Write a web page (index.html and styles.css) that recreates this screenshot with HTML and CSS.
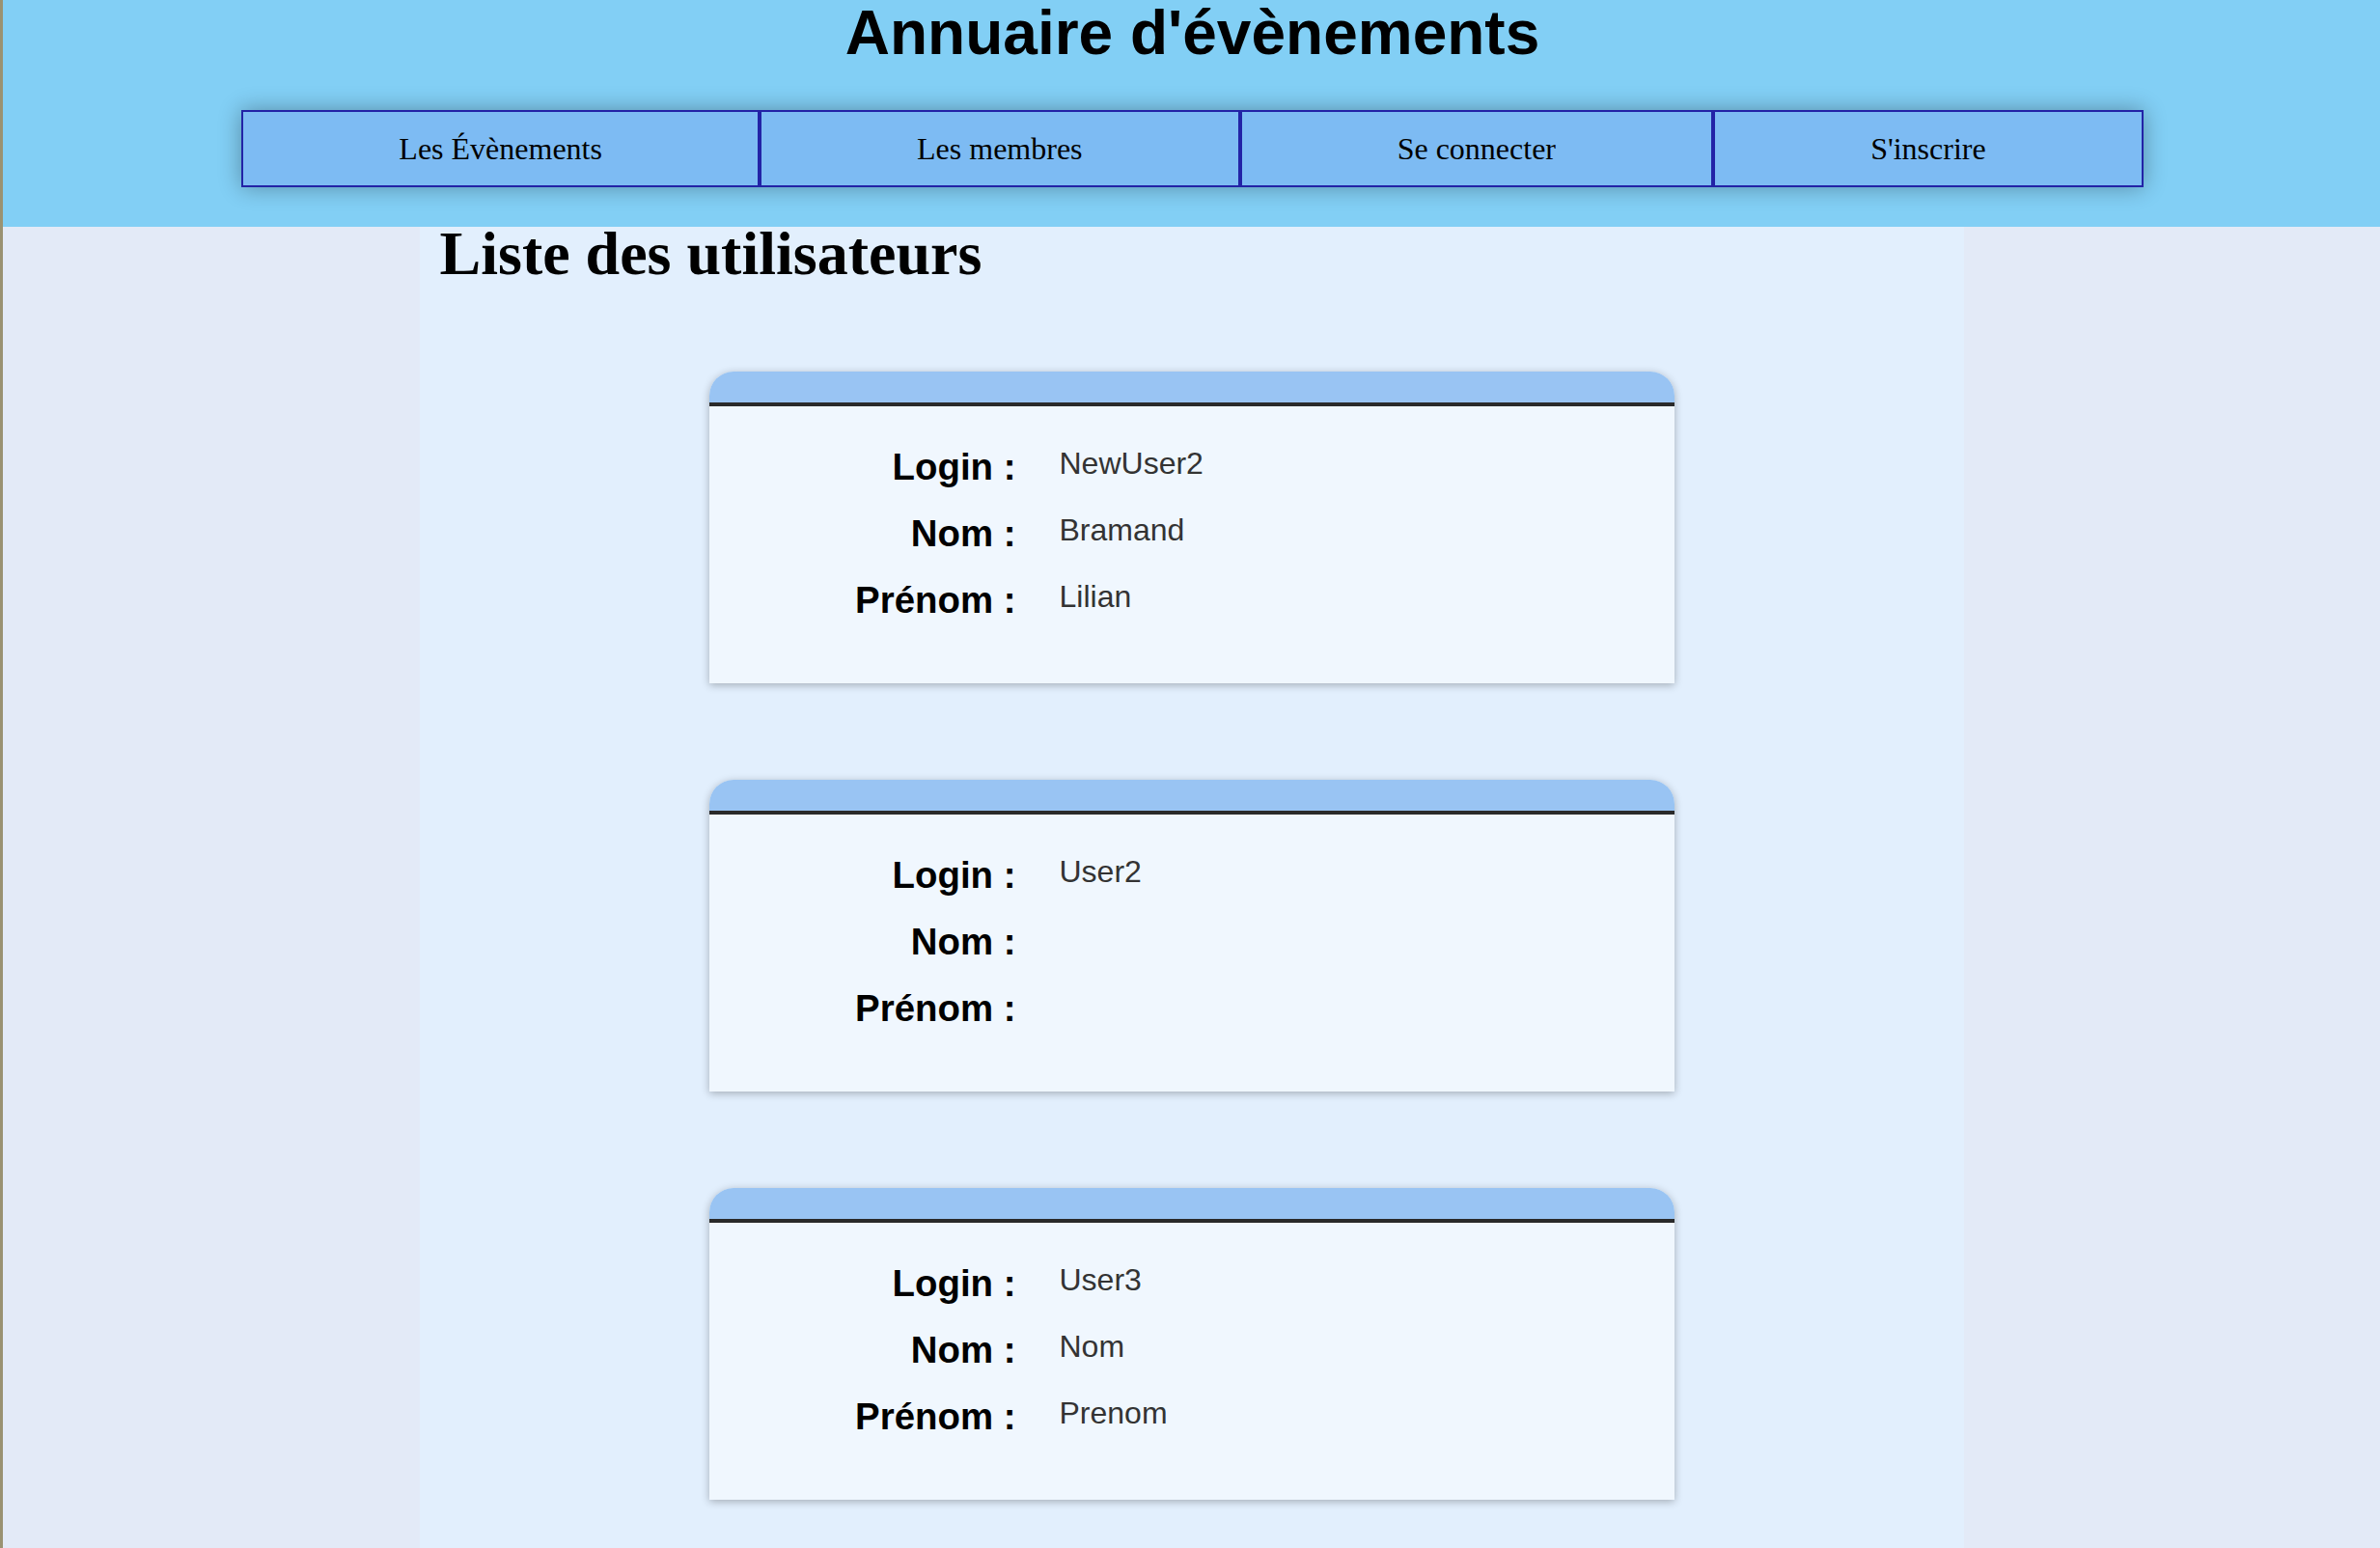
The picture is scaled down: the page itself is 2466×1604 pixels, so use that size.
FILE: index.html
```html
<!DOCTYPE html>
<html lang="fr">
<head>
<meta charset="utf-8">
<title>Annuaire d'évènements</title>
<link rel="stylesheet" href="styles.css">
</head>
<body>
<div class="page">
  <header class="site-header">
    <h1 class="site-title">Annuaire d'évènements</h1>
    <nav class="main-nav">
      <a class="nav-item" href="#">Les Évènements</a>
      <a class="nav-item" href="#">Les membres</a>
      <a class="nav-item" href="#">Se connecter</a>
      <a class="nav-item" href="#">S'inscrire</a>
    </nav>
  </header>
  <main class="content">
    <h2 class="page-title">Liste des utilisateurs</h2>
    <div class="user-list">
      <section class="user-card">
        <div class="card-head"></div>
        <div class="card-body">
          <span class="label">Login :</span><span class="value">NewUser2</span>
          <span class="label">Nom :</span><span class="value">Bramand</span>
          <span class="label">Prénom :</span><span class="value">Lilian</span>
        </div>
      </section>
      <section class="user-card">
        <div class="card-head"></div>
        <div class="card-body">
          <span class="label">Login :</span><span class="value">User2</span>
          <span class="label">Nom :</span><span class="value"></span>
          <span class="label">Prénom :</span><span class="value"></span>
        </div>
      </section>
      <section class="user-card">
        <div class="card-head"></div>
        <div class="card-body">
          <span class="label">Login :</span><span class="value">User3</span>
          <span class="label">Nom :</span><span class="value">Nom</span>
          <span class="label">Prénom :</span><span class="value">Prenom</span>
        </div>
      </section>
    </div>
  </main>
</div>
</body>
</html>
```
FILE: styles.css
```css
html, body {
  margin: 0;
  padding: 0;
}

body {
  background: #e3eaf7;
  font-family: "Liberation Serif", "Times New Roman", serif;
  color: #000;
}

.page {
  display: flex;
  flex-direction: column;
  min-height: 100vh;
  border-left: 3px solid #9a9272;
  box-sizing: border-box;
  background: #e3eaf7;
}

.site-header {
  background: #82cff5;
  padding: 2px 0 41px;
  display: flex;
  flex-direction: column;
  align-items: center;
}

.site-title {
  margin: 0 0 0 2px;
  font-family: "Liberation Sans", Arial, Helvetica, sans-serif;
  font-weight: bold;
  font-size: 64px;
  line-height: 64px;
  text-align: center;
}

.main-nav {
  margin: 48px 0 0 2px;
  width: 80%;
  display: flex;
  border: 2px solid #2323a6;
  border-right-width: 0;
  border-left-width: 0;
  box-shadow: 0 0 22px rgba(0, 0, 0, 0.33);
  background: #7dbbf3;
}

.nav-item {
  flex: 1 1 auto;
  height: 76px;
  display: flex;
  align-items: center;
  justify-content: center;
  border-left: 2px solid #2323a6;
  border-right: 2px solid #2323a6;
  font-size: 32px;
  color: #000;
  text-decoration: none;
  white-space: nowrap;
}

.content {
  flex: 1;
  width: 1600px;
  box-sizing: border-box;
  margin: 0 auto;
  padding: 0 20px 60px;
  background: #e2effd;
}

.page-title {
  margin: 0 0 0 1px;
  font-size: 64px;
  line-height: 56px;
  font-weight: bold;
}

.user-list {
  display: flex;
  flex-direction: column;
  align-items: center;
  gap: 100px;
  padding-top: 94px;
}

.user-card {
  width: 1000px;
  border-radius: 25px 25px 0 0;
  box-shadow: 0 2px 8px rgba(0, 0, 0, 0.28);
  background: #f0f7fe;
}

.card-head {
  height: 32px;
  background: #99c4f3;
  border-radius: 25px 25px 0 0;
  border-bottom: 4px solid #2a2a2a;
}

.card-body {
  display: grid;
  grid-template-columns: 318px 1fr;
  grid-auto-rows: 44px;
  column-gap: 45px;
  row-gap: 25px;
  align-items: start;
  padding: 41px 0 64px;
  font-family: "Liberation Sans", Arial, Helvetica, sans-serif;
}

.label {
  text-align: right;
  font-weight: bold;
  font-size: 38.4px;
  line-height: 44px;
  white-space: nowrap;
}

.value {
  font-size: 32px;
  line-height: 37px;
  color: #333;
}
```
